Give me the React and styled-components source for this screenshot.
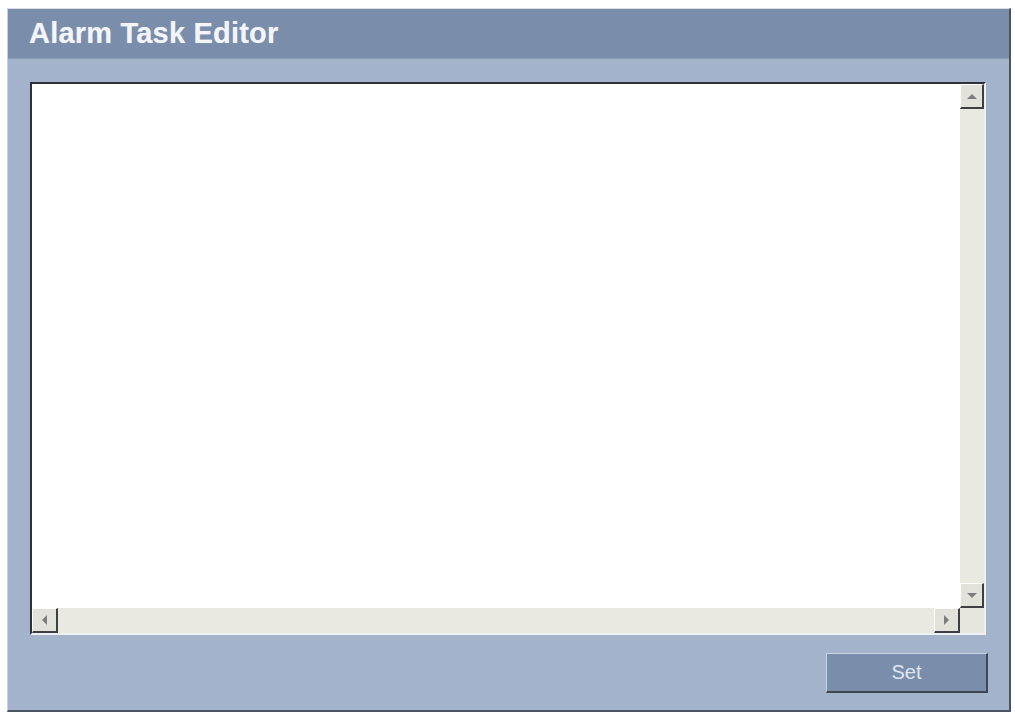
import React from "react";
import styled, { createGlobalStyle } from "styled-components";

const Global = createGlobalStyle`
  html, body { margin: 0; padding: 0; background: #ffffff; }
  body { font-family: "Liberation Sans", Arial, sans-serif; }
`;

const Page = styled.div`
  padding: 8px 0 0 7px;
`;

const Frame = styled.div`
  width: 1001px;
  height: 701px;
  display: flex;
  flex-direction: column;
  background: #a3b3cc;
  border-top: 1px solid #d6dce6;
  border-left: 1px solid #c9d2e0;
  border-right: 2px solid #4c5361;
  border-bottom: 2px solid #4c5361;
`;

const Header = styled.div`
  height: 50px;
  flex: none;
  display: flex;
  align-items: center;
  padding-left: 21px;
  background: #7a8dab;
  border-bottom: 1px solid #8c9cb8;
  box-sizing: border-box;
`;

const Title = styled.h1`
  margin: 0;
  font-family: "Liberation Sans", Arial, sans-serif;
  font-weight: bold;
  font-size: 29px;
  letter-spacing: 0.2px;
  color: #f3f5f9;
  text-shadow: 0 0 1px rgba(255, 255, 255, 0.4);
`;

const Body = styled.div`
  flex: 1;
  display: flex;
  flex-direction: column;
  padding: 23px 22px 17px 22px;
`;

const TextBox = styled.div`
  width: 956px;
  height: 553px;
  box-sizing: border-box;
  display: grid;
  grid-template-columns: 1fr 24px;
  grid-template-rows: 1fr 25px;
  border-top: 2px solid #2e3138;
  border-left: 2px solid #2e3138;
  border-right: 2px solid #eef0f2;
  border-bottom: 2px solid #eef0f2;
  background: #ffffff;
`;

const Content = styled.div`
  background: #ffffff;
`;

const VTrack = styled.div`
  display: flex;
  flex-direction: column;
  justify-content: space-between;
  background: #e9e9e2;
`;

const HTrack = styled.div`
  display: flex;
  justify-content: space-between;
  background: #e9e9e2;
`;

const Corner = styled.div`
  background: #e6e6de;
`;

const ScrollBtn = styled.div`
  width: ${(p) => p.$w}px;
  height: ${(p) => p.$h}px;
  box-sizing: border-box;
  display: flex;
  align-items: center;
  justify-content: center;
  background: #e2e2da;
  border-top: 1px solid #ffffff;
  border-left: 1px solid #ffffff;
  border-right: 2px solid #3c3f44;
  border-bottom: 2px solid #3c3f44;
`;

const Footer = styled.div`
  margin-top: 18px;
  display: flex;
  justify-content: flex-end;
`;

const SetButton = styled.button`
  width: 162px;
  height: 40px;
  box-sizing: border-box;
  background: #7a8dab;
  border-top: 1px solid #c9d3e2;
  border-left: 1px solid #c9d3e2;
  border-right: 2px solid #3f4653;
  border-bottom: 2px solid #3f4653;
  color: #dfe5ee;
  font-family: "Liberation Sans", Arial, sans-serif;
  font-size: 20px;
  padding: 0;
  margin-right: -1px;
`;

const Arrow = ({ dir }) => {
  const pts = {
    up: "1,7 6,2 11,7",
    down: "1,2 6,7 11,2",
    left: "7,1 2,6 7,11",
    right: "2,1 7,6 2,11",
  }[dir];
  const horiz = dir === "left" || dir === "right";
  return (
    <svg width={horiz ? 9 : 12} height={horiz ? 12 : 9} viewBox={horiz ? "0 0 9 12" : "0 0 12 9"}>
      <polygon points={pts} fill="#7a7c80" />
    </svg>
  );
};

export default function App() {
  return (
    <>
      <Global />
      <Page>
        <Frame>
          <Header>
            <Title>Alarm Task Editor</Title>
          </Header>
          <Body>
            <TextBox>
              <Content />
              <VTrack>
                <ScrollBtn $w={24} $h={25}>
                  <Arrow dir="up" />
                </ScrollBtn>
                <ScrollBtn $w={24} $h={25}>
                  <Arrow dir="down" />
                </ScrollBtn>
              </VTrack>
              <HTrack>
                <ScrollBtn $w={26} $h={25}>
                  <Arrow dir="left" />
                </ScrollBtn>
                <ScrollBtn $w={26} $h={25}>
                  <Arrow dir="right" />
                </ScrollBtn>
              </HTrack>
              <Corner />
            </TextBox>
            <Footer>
              <SetButton>Set</SetButton>
            </Footer>
          </Body>
        </Frame>
      </Page>
    </>
  );
}
